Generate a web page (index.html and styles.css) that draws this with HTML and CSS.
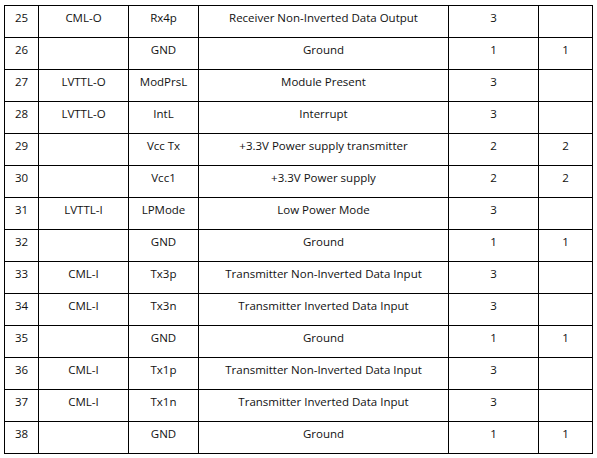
FILE: index.html
```html
<!DOCTYPE html>
<html>
<head>
<meta charset="utf-8">
<link rel="stylesheet" href="styles.css">
</head>
<body>
<table class="pins">
<colgroup>
<col class="c1"><col class="c2"><col class="c3"><col class="c4"><col class="c5"><col class="c6">
</colgroup>
<tbody>
<tr><td>25</td><td>CML-O</td><td>Rx4p</td><td>Receiver Non-Inverted Data Output</td><td>3</td><td></td></tr>
<tr><td>26</td><td></td><td>GND</td><td>Ground</td><td>1</td><td>1</td></tr>
<tr><td>27</td><td>LVTTL-O</td><td>ModPrsL</td><td>Module Present</td><td>3</td><td></td></tr>
<tr><td>28</td><td>LVTTL-O</td><td>IntL</td><td>Interrupt</td><td>3</td><td></td></tr>
<tr><td>29</td><td></td><td>Vcc Tx</td><td>+3.3V Power supply transmitter</td><td>2</td><td>2</td></tr>
<tr><td>30</td><td></td><td>Vcc1</td><td>+3.3V Power supply</td><td>2</td><td>2</td></tr>
<tr><td>31</td><td>LVTTL-I</td><td>LPMode</td><td>Low Power Mode</td><td>3</td><td></td></tr>
<tr><td>32</td><td></td><td>GND</td><td>Ground</td><td>1</td><td>1</td></tr>
<tr><td>33</td><td>CML-I</td><td>Tx3p</td><td>Transmitter Non-Inverted Data Input</td><td>3</td><td></td></tr>
<tr><td>34</td><td>CML-I</td><td>Tx3n</td><td>Transmitter Inverted Data Input</td><td>3</td><td></td></tr>
<tr><td>35</td><td></td><td>GND</td><td>Ground</td><td>1</td><td>1</td></tr>
<tr><td>36</td><td>CML-I</td><td>Tx1p</td><td>Transmitter Non-Inverted Data Input</td><td>3</td><td></td></tr>
<tr><td>37</td><td>CML-I</td><td>Tx1n</td><td>Transmitter Inverted Data Input</td><td>3</td><td></td></tr>
<tr><td>38</td><td></td><td>GND</td><td>Ground</td><td>1</td><td>1</td></tr>
</tbody>
</table>
</body>
</html>
```
FILE: styles.css
```css
html, body {
  margin: 0;
  padding: 0;
  background: #fff;
}
body {
  padding: 5px 0 0 4px;
  font-family: "Open Sans", "Liberation Sans", sans-serif;
  font-size: 11.5px;
  color: #111;
}
.pins {
  border-collapse: collapse;
  table-layout: fixed;
  width: 589px;
}
.c1 { width: 34px; }
.c2 { width: 90px; }
.c3 { width: 70px; }
.c4 { width: 250px; }
.c5 { width: 90px; }
.c6 { width: 54px; }
.pins td {
  border: 1px solid #000;
  height: 32px;
  padding: 3px 0 0 0;
  box-sizing: border-box;
  vertical-align: top;
  text-align: center;
  line-height: 18px;
  white-space: nowrap;
}
```
